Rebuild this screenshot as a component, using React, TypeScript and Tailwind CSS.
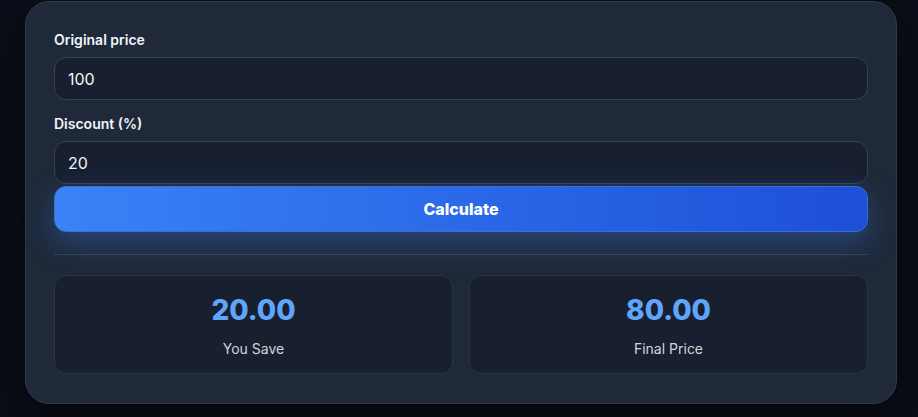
export default function App() {
  return (
    <div className="min-h-[417px] w-full bg-[#0a0e18] pt-[1px] font-['Inter',sans-serif]">
      <div className="ml-[25px] w-[872px] rounded-[24px] border border-[#303a4b] bg-[#1f2939] px-7 pt-7 pb-[29px] shadow-[0_20px_50px_rgba(0,0,0,0.5)]">
        <Field label="Original price" value="100" />
        <div className="mt-[14px]">
          <Field label="Discount (%)" value="20" />
        </div>
        <button className="mt-[2px] h-[46px] w-full rounded-xl border border-[#3b6fd8] bg-gradient-to-r from-[#3b82f6] to-[#1d4fd8] text-base font-extrabold text-white shadow-[0_10px_30px_rgba(59,130,246,0.35)]">
          Calculate
        </button>
        <div className="mt-[22px] h-px w-full bg-[#334155]" />
        <div className="mt-[20px] grid grid-cols-2 gap-4">
          <Result value="20.00" label="You Save" />
          <Result value="80.00" label="Final Price" />
        </div>
      </div>
    </div>
  );
}

function Field({ label, value }: { label: string; value: string }) {
  return (
    <div>
      <p className="mb-[7px] text-sm leading-5 font-semibold text-[#f1f5f9]">{label}</p>
      <div className="flex h-[43px] items-center rounded-xl border border-[#364152] bg-[#182030] px-[13px] text-base text-[#f3f4f6]">
        {value}
      </div>
    </div>
  );
}

function Result({ value, label }: { value: string; label: string }) {
  return (
    <div className="flex h-[99px] flex-col items-center rounded-xl border border-[#2a3444] bg-[#182030] pt-[16px]">
      <p className="text-[28px] leading-9 font-extrabold text-[#60a5fa]">{value}</p>
      <p className="mt-[11px] text-sm leading-5 text-[#d1d5db]">{label}</p>
    </div>
  );
}
